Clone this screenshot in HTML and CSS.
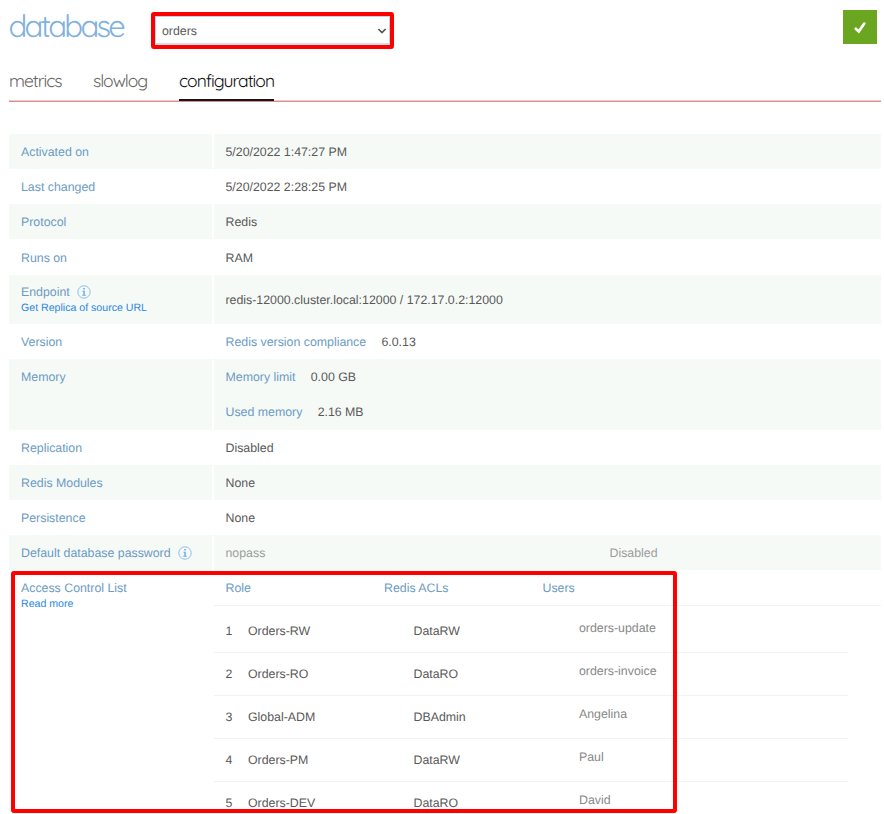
FILE: index.html
```html
<!DOCTYPE html>
<html lang="en">
<head>
<meta charset="utf-8">
<title>database configuration</title>
<link rel="stylesheet" href="styles.css">
</head>
<body>
<svg width="0" height="0" class="defs"><symbol id="info" viewBox="0 0 14 14"><circle cx="7" cy="7" r="6.2" fill="#f3f9fd" stroke="#8fbfe8" stroke-width="1"/><path d="M6.2 3h1.7v1.5H6.2zM5.4 5.8h2.4v3.9h1v1H5.2v-1h1.1V6.8h-.9z" fill="#75ade0"/></symbol></svg>
<header class="top">
  <h1>database</h1>
  <div class="picker"><span>orders</span><svg width="10" height="8" viewBox="0 0 10 8"><path d="M1.4 2 5 5.5 8.6 2" fill="none" stroke="#555" stroke-width="1.7"/></svg></div>
  <div class="ok"><svg width="34" height="34" viewBox="0 0 34 34"><path d="M12.8 18.7 15.8 21.5 21.3 13.6" fill="none" stroke="#fff" stroke-width="2.7" stroke-linecap="round"/></svg></div>
</header>
<nav class="tabs"><a class="metrics">metrics</a><a class="slowlog">slowlog</a><a class="active">configuration</a></nav>
<main class="table">
  <div class="row shade"><div class="key">Activated on</div><div class="val">5/20/2022 1:47:27 PM</div></div>
  <div class="row"><div class="key">Last changed</div><div class="val">5/20/2022 2:28:25 PM</div></div>
  <div class="row shade"><div class="key">Protocol</div><div class="val">Redis</div></div>
  <div class="row"><div class="key">Runs on</div><div class="val">RAM</div></div>
  <div class="row shade endpoint"><div class="key"><div>Endpoint<svg class="info"><use href="#info"/></svg></div><a>Get Replica of source URL</a></div><div class="val">redis-12000.cluster.local:12000 / 172.17.0.2:12000</div></div>
  <div class="row"><div class="key">Version</div><div class="val"><span class="label">Redis version compliance</span>6.0.13</div></div>
  <div class="row shade memory"><div class="key">Memory</div><div class="val"><div><span class="label">Memory limit</span>0.00 GB</div><div><span class="label">Used memory</span>2.16 MB</div></div></div>
  <div class="row"><div class="key">Replication</div><div class="val">Disabled</div></div>
  <div class="row shade"><div class="key">Redis Modules</div><div class="val">None</div></div>
  <div class="row"><div class="key">Persistence</div><div class="val">None</div></div>
  <div class="row shade"><div class="key">Default database password<svg class="info"><use href="#info"/></svg></div><div class="val password"><span>nopass</span><span>Disabled</span></div></div>
  <div class="row acl">
    <div class="key"><div>Access Control List</div><a>Read more</a></div>
    <div class="acl-table">
      <div class="acl-head"><span>Role</span><span>Redis ACLs</span><span>Users</span></div>
      <div class="acl-row first"><span>1</span><span>Orders-RW</span><span>DataRW</span><span class="user">orders-update</span></div>
      <div class="acl-row"><span>2</span><span>Orders-RO</span><span>DataRO</span><span class="user">orders-invoice</span></div>
      <div class="acl-row"><span>3</span><span>Global-ADM</span><span>DBAdmin</span><span class="user">Angelina</span></div>
      <div class="acl-row"><span>4</span><span>Orders-PM</span><span>DataRW</span><span class="user">Paul</span></div>
      <div class="acl-row"><span>5</span><span>Orders-DEV</span><span>DataRO</span><span class="user">David</span></div>
    </div>
  </div>
</main>
<div class="mark mark-select"></div>
<div class="mark mark-acl"></div>
</body>
</html>
```
FILE: styles.css
```css
* { box-sizing: border-box; }
body {
  margin: 0;
  position: relative;
  width: 884px;
  height: 814px;
  overflow: hidden;
  background: #fff;
  color: #595959;
  font: 12.35px/16px "Liberation Sans", Arial, sans-serif;
  text-rendering: geometricPrecision;
}
.defs { position: absolute; }
.top { display: flex; height: 64px; padding-left: 8.5px; }
h1 {
  margin: 6px 0 0;
  width: 146.5px;
  color: #7fb1de;
  font: 400 31px/40px Quicksand, Lato, sans-serif;
  letter-spacing: -2.75px;
}
.picker {
  display: flex;
  align-items: center;
  justify-content: space-between;
  width: 235px;
  height: 29px;
  margin-top: 16px;
  padding: 1px 2px 0 6px;
  border: 1px solid #b5d7ee;
  border-bottom: 2px solid #c8e0f0;
}
.ok { width: 34px; height: 34px; margin: 10px 7px 0 auto; background: #6ba621; }
.ok svg { display: block; }
.tabs {
  display: flex;
  width: 872px;
  height: 38px;
  margin-left: 9px;
  border-bottom: 1px solid #d98f8f;
  box-shadow: inset 0 -1px #f0c9c9;
  font: 400 17.5px/35px Quicksand, Lato, sans-serif;
  letter-spacing: -1px;
  color: #666;
}
.tabs .metrics { width: 84px; }
.tabs .slowlog { width: 86px; }
.tabs .active { width: 95px; height: 37px; color: #111; border-bottom: 2px solid #151515; white-space: nowrap; }
.table { width: 872px; margin: 32px 0 0 9px; }
.row { display: grid; grid-template-columns: 203px 667px; column-gap: 2px; height: 35.15px; }
.key { padding: 10.1px 0 0 12px; color: #6c9bc3; white-space: nowrap; }
.val { padding: 10.1px 0 0 11.5px; white-space: nowrap; }
.shade > div { background: #f6faf7; }
a { display: block; }
.key a { color: #2b86e3; font-size: 10.6px; line-height: 16px; }
.info { width: 14px; height: 14px; margin-left: 7px; vertical-align: -3px; }
.endpoint { height: 49.6px; }
.endpoint .key { padding-top: 9.5px; }
.endpoint .val { padding-top: 17.8px; }
.label { color: #6c9bc3; margin-right: 15.3px; }
.memory { height: 70.3px; }
.memory .val div { height: 35.1px; }
.memory .val div:last-child { height: 16px; }
.password { display: flex; color: #9c9c9c; }
.password span:first-child { width: 384px; }
.acl { height: 245px; }
.acl-head { display: grid; grid-template-columns: 158.5px 158.5px 1fr; height: 35.5px; padding: 10.1px 0 0 11.5px; color: #6c9bc3; border-bottom: 1px solid #f1f2f2; }
.acl-row { display: grid; grid-template-columns: 22.5px 165.5px 165.5px 1fr; width: 634px; height: 43px; padding: 13px 0 0 11.5px; border-bottom: 1px solid #f1f2f2; }
.acl-row.first { height: 47px; padding-top: 17px; }
.user { color: #888; margin-top: -3px; }
.mark { position: absolute; border: 4px solid #f00; border-radius: 3px; }
.mark-select { left: 151px; top: 12px; width: 243px; height: 37px; }
.mark-acl { left: 11px; top: 571px; width: 666px; height: 242px; }
```
